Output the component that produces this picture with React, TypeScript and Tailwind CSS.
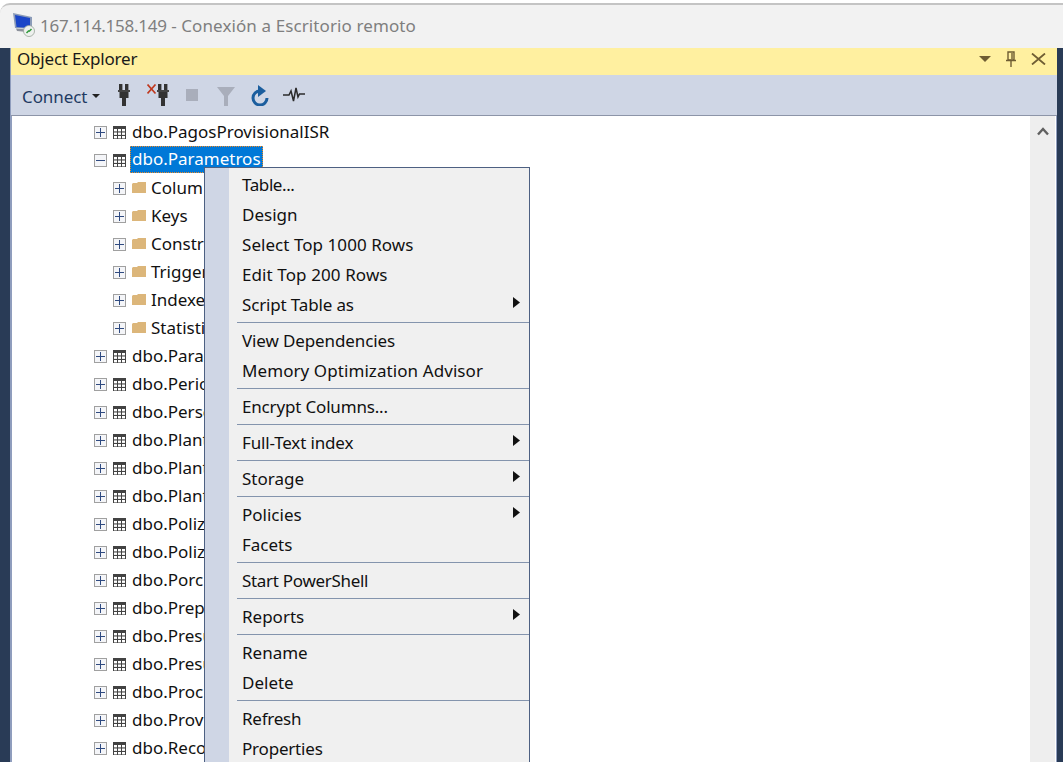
import React from "react";

const font = { fontFamily: '"Noto Sans", sans-serif' };

function Expander({ minus }: { minus?: boolean }) {
  return (
    <span className="relative block w-[13px] h-[13px] border border-[#a0a0a0] bg-[#f4f5f8] shrink-0">
      <span className="absolute left-[1px] right-[1px] top-[5px] h-px bg-[#2f4a80]" />
      {!minus && <span className="absolute top-[1px] bottom-[1px] left-[5px] w-px bg-[#2f4a80]" />}
    </span>
  );
}

function TableIcon() {
  return (
    <svg width="13" height="13" viewBox="0 0 13 13" className="block shrink-0">
      <rect x="0" y="0" width="13" height="13" fill="#424242" />
      <g fill="#ffffff">
        {[3, 6.5, 10].map((y) =>
          [1, 5, 9].map((x) => <rect key={`${x}-${y}`} x={x} y={y} width="3" height="2.4" />)
        )}
      </g>
    </svg>
  );
}

function FolderIcon() {
  return (
    <svg width="14" height="12" viewBox="0 0 14 12" className="block shrink-0">
      <path d="M0 2 L1 1 H5 L6 0 H14 V11 H0 Z" fill="#dcb67a" />
    </svg>
  );
}

function PlugShape() {
  return (
    <g fill="#333333">
      <rect x="1" y="0" width="3.4" height="6" />
      <rect x="7" y="0" width="3.4" height="6" />
      <rect x="0" y="6" width="12" height="2" fill="#444444" />
      <rect x="1.5" y="8" width="9" height="6" />
      <rect x="4" y="14" width="4" height="8" />
    </g>
  );
}

const rows: { label: string; level: number; minus?: boolean; folder?: boolean; selected?: boolean }[] = [
  { label: "dbo.PagosProvisionalISR", level: 0 },
  { label: "dbo.Parametros", level: 0, minus: true, selected: true },
  { label: "Colum", level: 1, folder: true },
  { label: "Keys", level: 1, folder: true },
  { label: "Constr", level: 1, folder: true },
  { label: "Trigger", level: 1, folder: true },
  { label: "Indexe", level: 1, folder: true },
  { label: "Statisti", level: 1, folder: true },
  { label: "dbo.Para", level: 0 },
  { label: "dbo.Perio", level: 0 },
  { label: "dbo.Perso", level: 0 },
  { label: "dbo.Plant", level: 0 },
  { label: "dbo.Plant", level: 0 },
  { label: "dbo.Plant", level: 0 },
  { label: "dbo.Poliz", level: 0 },
  { label: "dbo.Poliz", level: 0 },
  { label: "dbo.Porc", level: 0 },
  { label: "dbo.Prep", level: 0 },
  { label: "dbo.Presu", level: 0 },
  { label: "dbo.Presu", level: 0 },
  { label: "dbo.Proc", level: 0 },
  { label: "dbo.Prov", level: 0 },
  { label: "dbo.Reco", level: 0 },
];

type Entry = { label: string; arrow?: boolean; track?: string } | "sep";
const menu: Entry[] = [
  { label: "Table...", track: "tracking-[-0.4px]" },
  { label: "Design" },
  { label: "Select Top 1000 Rows", track: "tracking-[0.05px]" },
  { label: "Edit Top 200 Rows", track: "tracking-[0.1px]" },
  { label: "Script Table as", arrow: true, track: "tracking-[-0.15px]" },
  "sep",
  { label: "View Dependencies", track: "tracking-[-0.12px]" },
  { label: "Memory Optimization Advisor", track: "tracking-[0.08px]" },
  "sep",
  { label: "Encrypt Columns...", track: "tracking-[-0.17px]" },
  "sep",
  { label: "Full-Text index", arrow: true, track: "tracking-[-0.15px]" },
  "sep",
  { label: "Storage", arrow: true },
  "sep",
  { label: "Policies", arrow: true },
  { label: "Facets" },
  "sep",
  { label: "Start PowerShell", track: "tracking-[-0.3px]" },
  "sep",
  { label: "Reports", arrow: true },
  "sep",
  { label: "Rename" },
  { label: "Delete" },
  "sep",
  { label: "Refresh", track: "tracking-[-0.25px]" },
  { label: "Properties", track: "tracking-[-0.2px]" },
];

export default function App() {
  return (
    <div className="w-[1063px] h-[762px] overflow-hidden flex flex-col bg-white text-[#111] relative" style={font}>
      {/* Remote desktop title bar */}
      <div className="h-[48px] shrink-0 bg-white pt-[3px]">
        <div className="h-[45px] bg-[#f2f2f2] border-t-2 border-[#c4c4c4] rounded-tl-[10px] flex items-center pl-[13px] pb-[3px] gap-[5px]">
          <svg width="22" height="24" viewBox="0 0 22 24" className="shrink-0">
            <path d="M0 0 L19 4 L19 16 L2 15 Z" fill="#8b9bb8" />
            <path d="M2 2 L17 5 L17 15 L3.5 14 Z" fill="#1b46c8" />
            <path d="M3 15.5 L15 16.5 L14 19 L4 18 Z" fill="#8d929c" />
            <circle cx="16" cy="18" r="5.5" fill="#eef1ee" stroke="#9aa49a" strokeWidth="0.8" />
            <path d="M13.5 20 L16 17.5 M16 18.5 L18.5 16" stroke="#2f9a3a" strokeWidth="1.5" />
          </svg>
          <span className="text-[17px] leading-none text-[#7f7f7f] whitespace-nowrap">
            <span className="tracking-[-0.25px]">167.114.158.149</span>
            <span className="tracking-[0.1px]"> - Conexión a Escritorio remoto</span>
          </span>
        </div>
      </div>

      {/* Body */}
      <div className="flex-1 min-h-0 flex bg-[#293b56]">
        <div className="w-[10px] shrink-0" />
        <div className="flex-1 min-w-0 flex flex-col bg-[#cfd6e5] border-l border-[#8f9dbd]">
          {/* Header */}
          <div className="h-[27px] shrink-0 bg-[#fff0a0] flex items-center pl-[6px] pr-[11px] pb-[6px]">
            <span className="text-[17px] leading-none text-[#1a1a1a] tracking-[-0.2px]">Object Explorer</span>
            <div className="ml-auto flex items-center gap-[15px]">
              <svg width="12" height="6" viewBox="0 0 12 6"><path d="M0 0 H12 L6 6 Z" fill="#6f5d33" /></svg>
              <svg width="10" height="16" viewBox="0 0 10 16">
                <path d="M2 1 H8 V9 H2 Z M6 2 V8" fill="none" stroke="#6f5d33" strokeWidth="1.4" />
                <path d="M0 9.5 H10 M5 9.5 V16" stroke="#6f5d33" strokeWidth="1.4" />
              </svg>
              <svg width="15" height="12" viewBox="0 0 15 12">
                <path d="M1 0.5 L14 11.5 M14 0.5 L1 11.5" stroke="#6f5d33" strokeWidth="1.8" />
              </svg>
            </div>
          </div>
          {/* Toolbar */}
          <div className="h-[41px] shrink-0 flex items-center pl-[11px] border-b border-[#8d95a8] bg-[#cfd6e5]">
            <span className="w-[70px] pt-[2px] text-[17px] leading-none text-[#1f3b63] tracking-[-0.1px]">Connect</span>
            <svg width="8" height="4" viewBox="0 0 8 4" className="mt-[2px]"><path d="M0 0 H8 L4 4 Z" fill="#222" /></svg>
            <svg width="12" height="22" viewBox="0 0 12 22" className="ml-[18px] shrink-0">
              <PlugShape />
            </svg>
            <svg width="22" height="22" viewBox="0 0 22 22" className="ml-[17px] shrink-0">
              <path d="M0.5 0.5 L8.5 9.5 M8.5 0.5 L0.5 9.5" stroke="#c0391f" strokeWidth="1.7" fill="none" />
              <g transform="translate(10 0)"><PlugShape /></g>
            </svg>
            <span className="ml-[17px] w-[12px] h-[12px] bg-[#a9aebb] block shrink-0" />
            <svg width="18" height="19" viewBox="0 0 18 19" className="ml-[19px] shrink-0 mt-[2px]"><path d="M0 0 H18 L11 9 V19 H7 V9 Z" fill="#a9aebb" /></svg>
            <svg width="18" height="21" viewBox="0 0 18 21" className="ml-[16px] shrink-0">
              <path d="M9 6 A7 7 0 1 0 16 13" fill="none" stroke="#1b5e9e" strokeWidth="3" />
              <path d="M7 0 L15 6 L7 12 Z" fill="#1b5e9e" />
            </svg>
            <svg width="22" height="16" viewBox="0 0 22 16" className="ml-[14px] shrink-0">
              <path d="M0 8 H6 L8 4 L10.5 14 L13 1 L15 10 L16.5 7 H22" fill="none" stroke="#2b2b2b" strokeWidth="1.5" />
            </svg>
          </div>

          {/* Tree + scrollbar */}
          <div className="flex-1 min-h-0 flex bg-white pr-[1px] overflow-hidden border-l border-r border-[#8f9dbd]">
            <div className="flex-1 min-w-0 pt-[2px]">
              {rows.map((r, i) => (
                <div
                  key={i}
                  className={`h-[28px] flex items-center ${r.level === 0 ? "pl-[82px]" : "pl-[101px]"}`}
                >
                  <Expander minus={r.minus} />
                  <span className="ml-[6px]">{r.folder ? <FolderIcon /> : <TableIcon />}</span>
                  <span
                    className={
                      r.selected
                        ? "ml-[4px] h-[27px] self-start flex items-center px-[2px] pb-[2px] bg-[#0078d7] text-white outline-1 -outline-offset-1 outline-dotted outline-[#f08a24] text-[17px] leading-none whitespace-nowrap"
                        : r.folder
                          ? "ml-[5px] pb-[2px] text-[17px] leading-none text-[#111] whitespace-nowrap"
                          : "ml-[6px] pb-[2px] text-[17px] leading-none text-[#111] whitespace-nowrap"
                    }
                  >
                    {r.label}
                  </span>
                </div>
              ))}
            </div>
            <div className="w-[25px] shrink-0 bg-[#eeeeee] flex justify-center pt-[11px]">
              <svg width="12" height="9" viewBox="0 0 12 9">
                <path d="M1 7.5 L6 2 L11 7.5" fill="none" stroke="#606060" strokeWidth="2.4" />
              </svg>
            </div>
          </div>
        </div>
        <div className="w-[6px] shrink-0" />
      </div>

      {/* Context menu */}
      <div className="absolute left-[204px] top-[167px] w-[326px] h-[595px] overflow-hidden bg-[#f0f0f0] border border-[#4d6082] border-b-0 pt-[1px] flex flex-col">
        <div className="absolute left-0 top-0 bottom-0 w-[24px] bg-[#cfd6e5]" />
        {menu.map((m, i) =>
          m === "sep" ? (
            <div key={i} className="h-[6px] shrink-0 pl-[32px] pt-[3px]">
              <div className="h-px bg-[#8494ad]" />
            </div>
          ) : (
            <div key={i} className="relative h-[30px] shrink-0 flex items-center pl-[37px] pr-[9px]">
              <span className={`text-[17px] leading-none text-[#111] whitespace-nowrap ${m.track ?? ""}`}>{m.label}</span>
              {m.arrow && (
                <svg width="7" height="11" viewBox="0 0 7 11" className="ml-auto -mt-[3px]">
                  <path d="M0 0 L7 5.5 L0 11 Z" fill="#111" />
                </svg>
              )}
            </div>
          )
        )}
      </div>
    </div>
  );
}
